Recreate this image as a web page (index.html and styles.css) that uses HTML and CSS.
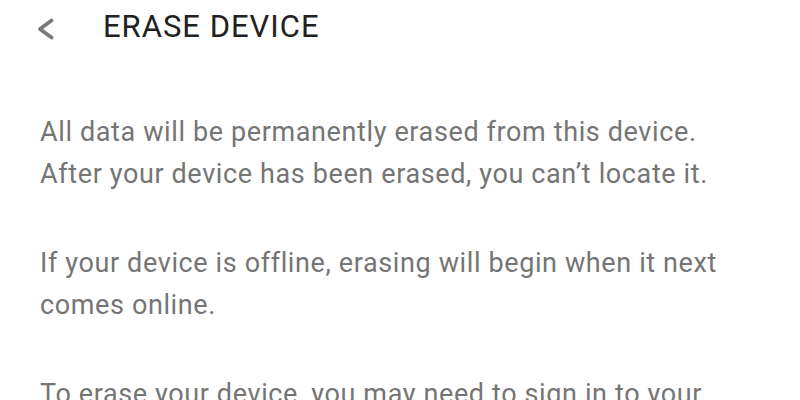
FILE: index.html
```html
<!DOCTYPE html>
<html>
<head>
<meta charset="utf-8">
<link rel="stylesheet" href="styles.css">
</head>
<body>
<div class="page">
  <header class="header">
    <svg class="back" width="20" height="24" viewBox="0 0 20 24">
      <polyline points="15.5,3.5 4,12 15.5,20.5" fill="none" stroke="#7a7a7a" stroke-width="3.8" stroke-linecap="round" stroke-linejoin="round"/>
    </svg>
    <h1 class="title">ERASE DEVICE</h1>
  </header>
  <main class="content">
    <p class="para">All data will be permanently erased from this device.<br>After your device has been erased, you can’t locate it.</p>
    <p class="para">If your device is offline, erasing will begin when it next<br>comes online.</p>
    <p class="para">To erase your device, you may need to sign in to your</p>
  </main>
</div>
</body>
</html>
```
FILE: styles.css
```css
html, body {
  margin: 0;
  padding: 0;
  background: #ffffff;
}
.page {
  width: 800px;
  height: 400px;
  overflow: hidden;
  font-family: Roboto, "Liberation Sans", sans-serif;
}
.header {
  display: flex;
  align-items: flex-start;
  padding: 8px 0 0 36px;
  gap: 47px;
}
.back {
  margin-top: 9px;
  flex: none;
}
.title {
  margin: 0;
  font-size: 31px;
  font-weight: 400;
  letter-spacing: 1px;
  line-height: normal;
  color: #212121;
}
.content {
  padding: 66px 0 0 40px;
}
.para {
  margin: 0 0 47px 0;
  font-size: 27px;
  letter-spacing: 0.62px;
  line-height: 42px;
  color: #757575;
  white-space: nowrap;
}
```
